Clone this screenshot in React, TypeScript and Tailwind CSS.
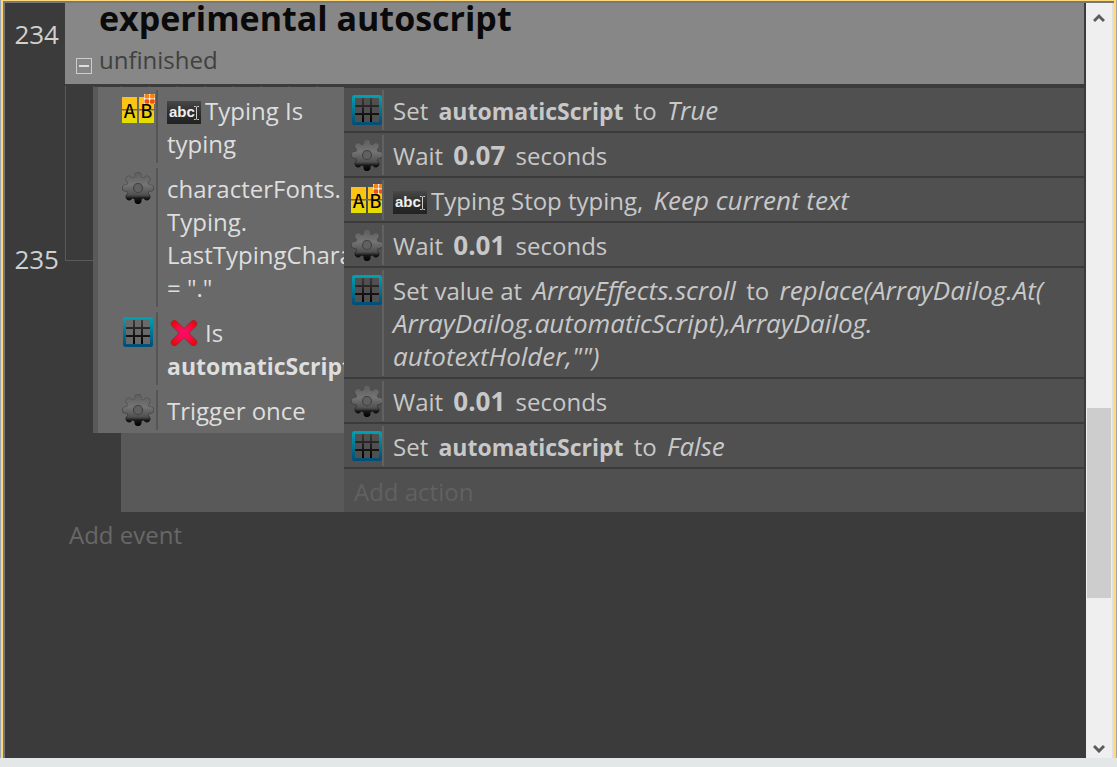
import type { ReactNode } from 'react';

const GEAR_ANGLES = [0, 45, 90, 135, 180, 225, 270, 315];

function GearIcon() {
  return (
    <svg width="32" height="32" viewBox="0 0 32 32" className="block shrink-0">
      <defs>
        <linearGradient id="gear-body" gradientUnits="userSpaceOnUse" x1="0" y1="0" x2="0" y2="32">
          <stop offset="0" stopColor="#4c4c4c" />
          <stop offset="0.4" stopColor="#484848" />
          <stop offset="0.7" stopColor="#2c2c2c" />
          <stop offset="0.85" stopColor="#080808" />
          <stop offset="1" stopColor="#000000" />
        </linearGradient>
        <linearGradient id="gear-face" gradientUnits="userSpaceOnUse" x1="0" y1="0" x2="0" y2="32">
          <stop offset="0" stopColor="#5c5c5c" />
          <stop offset="0.4" stopColor="#747474" />
          <stop offset="0.72" stopColor="#505050" />
          <stop offset="0.82" stopColor="#181818" />
          <stop offset="1" stopColor="#000000" />
        </linearGradient>
      </defs>
      {['gear-body', 'gear-face'].map((fill, layer) => (
        <g key={fill} stroke={`url(#${fill})`} strokeWidth={layer === 0 ? 7 : 5.8} strokeLinecap="round">
          {GEAR_ANGLES.map((angle) => {
            const rad = (angle * Math.PI) / 180;
            return (
              <line
                key={angle}
                x1={16}
                y1={16}
                x2={16 + Math.sin(rad) * 12.5 + 0.01}
                y2={16 - Math.cos(rad) * 12.5}
              />
            );
          })}
          <circle cx="16" cy="16" r={layer === 0 ? 11.2 : 10.8} fill={`url(#${fill})`} strokeWidth="1" />
        </g>
      ))}
      <circle cx="16" cy="16" r="4.5" fill="#606060" stroke="#424242" strokeWidth="1.2" />
    </svg>
  );
}

function ArrayIcon() {
  return (
    <svg width="32" height="32" viewBox="0 0 32 32" className="block shrink-0">
      <defs>
        <linearGradient id="array-frame" x1="0" y1="0" x2="0" y2="1">
          <stop offset="0" stopColor="#009fb2" />
          <stop offset="1" stopColor="#004f78" />
        </linearGradient>
        <linearGradient id="array-grid" x1="0" y1="0" x2="0" y2="1">
          <stop offset="0" stopColor="#3c3c3c" />
          <stop offset="1" stopColor="#000000" />
        </linearGradient>
      </defs>
      <rect x="2.5" y="2.5" width="27" height="27" rx="1" fill="none" stroke="url(#array-frame)" strokeWidth="3" />
      <path
        d="M11 4h2v7h6V4h2v7h7v2h-7v6h7v2h-7v7h-2v-7h-6v7h-2v-7H4v-2h7v-6H4v-2h7zM13 13v6h6v-6z"
        fill="url(#array-grid)"
        fillRule="evenodd"
      />
    </svg>
  );
}

function SpriteFontIcon() {
  return (
    <svg width="34" height="32" viewBox="0 0 34 32" className="block shrink-0">
      <defs>
        <linearGradient id="tile" x1="0" y1="0" x2="0" y2="1">
          <stop offset="0" stopColor="#ffc01c" />
          <stop offset="0.5" stopColor="#fbc80c" />
          <stop offset="1" stopColor="#e0e000" />
        </linearGradient>
      </defs>
      <rect x="0" y="3" width="15" height="26" fill="url(#tile)" />
      <rect x="17" y="3" width="15" height="26" fill="url(#tile)" />
      <rect x="0" y="15" width="32" height="1.5" fill="#6b6b50" />
      <g fontFamily="'DejaVu Sans Mono', monospace" fontSize="20" textAnchor="middle" fill="#000">
        <text x="7.5" y="24">A</text>
        <text x="24.5" y="24">B</text>
      </g>
      <rect x="22" y="0" width="11" height="10" fill="#fff" />
      <g fill="#f88210">
        <rect x="22.5" y="0" width="4.8" height="4.5" rx="1.2" />
        <rect x="28" y="0" width="4.8" height="4.5" rx="1.2" />
        <rect x="22.5" y="5.2" width="4.8" height="4.5" rx="1.2" fill="#ee5410" />
        <rect x="28" y="5.2" width="4.8" height="4.5" rx="1.2" fill="#ee5410" />
      </g>
    </svg>
  );
}

function TypingIcon() {
  return (
    <svg width="34" height="23" viewBox="0 0 34 23" className="mr-1 mb-0.5 inline-block align-middle">
      <defs>
        <linearGradient id="typing-bg" x1="0" y1="0" x2="0" y2="1">
          <stop offset="0" stopColor="#484848" />
          <stop offset="0.5" stopColor="#2e2e2e" />
          <stop offset="1" stopColor="#222222" />
        </linearGradient>
      </defs>
      <rect width="34" height="23" fill="url(#typing-bg)" />
      <text x="2" y="16" fontFamily="'Liberation Sans', sans-serif" fontSize="15" fontWeight="bold" fill="#f0f0f0">
        abc
      </text>
      <path d="M27 5.5h1.5l1 .5 1-.5h1.5M29.5 6v12M27 18.5h1.5l1-.5 1 .5h1.5" fill="none" stroke="#cfcfcf" />
    </svg>
  );
}

function InvertedIcon() {
  return (
    <svg width="34" height="26" viewBox="0 0 34 26" className="mr-1 mb-1.5 inline-block align-middle">
      <defs>
        <radialGradient id="cross" gradientUnits="userSpaceOnUse" cx="17" cy="13" r="15">
          <stop offset="0" stopColor="#ff0a6c" />
          <stop offset="0.5" stopColor="#fa0a48" />
          <stop offset="1" stopColor="#e80808" />
        </radialGradient>
      </defs>
      <path d="M7.5 3.8l19 18.6M26.5 3.8l-19 18.6" stroke="#8a3040" strokeWidth="7.4" strokeLinecap="round" />
      <path d="M7.5 3.8l19 18.6M26.5 3.8l-19 18.6" stroke="url(#cross)" strokeWidth="6" strokeLinecap="round" />
    </svg>
  );
}

const icons = {
  gear: <GearIcon />,
  array: <ArrayIcon />,
  font: <SpriteFontIcon />,
};

function Name({ children }: { children: ReactNode }) {
  return <b className="mx-1 text-[23px]">{children}</b>;
}

function Value({ children }: { children: ReactNode }) {
  return <i className="mx-1 text-[26px]">{children}</i>;
}

type Row = { icon: keyof typeof icons; lines: ReactNode[] };

const wait = (time: string): Row => ({
  icon: 'gear',
  lines: [<>Wait <b className="mx-1 text-[26px]">{time}</b> seconds</>],
});

const conditions: Row[] = [
  { icon: 'font', lines: [<><TypingIcon />Typing Is</>, 'typing'] },
  { icon: 'gear', lines: ['characterFonts.', 'Typing.', 'LastTypingCharacter', '= "."'] },
  { icon: 'array', lines: [<><InvertedIcon />Is</>, <b className="text-[23px]">automaticScript</b>] },
  { icon: 'gear', lines: ['Trigger once'] },
];

const actions: Row[] = [
  { icon: 'array', lines: [<>Set <Name>automaticScript</Name> to <Value>True</Value></>] },
  wait('0.07'),
  { icon: 'font', lines: [<><TypingIcon />Typing Stop typing, <Value>Keep current text</Value></>] },
  wait('0.01'),
  {
    icon: 'array',
    lines: [
      <>Set value at <Value>ArrayEffects.scroll</Value> to <Value>replace(ArrayDailog.At(</Value></>,
      <i className="text-[26px]">ArrayDailog.automaticScript),ArrayDailog.</i>,
      <i className="text-[26px]">autotextHolder,"")</i>,
    ],
  },
  wait('0.01'),
  { icon: 'array', lines: [<>Set <Name>automaticScript</Name> to <Value>False</Value></>] },
];

function Lines({ lines }: { lines: ReactNode[] }) {
  return (
    <div className="min-w-0 flex-1 overflow-hidden pt-1 pb-[3px] pl-[9px]">
      {lines.map((line, i) => (
        <div key={i} className="h-[33px] whitespace-nowrap">{line}</div>
      ))}
    </div>
  );
}

function Condition({ icon, lines }: Row) {
  return (
    <div className="flex">
      <div className="w-[34px] shrink-0 pt-1">{icons[icon]}</div>
      <div className="w-0.5 shrink-0 bg-[#555555]" />
      <Lines lines={lines} />
    </div>
  );
}

function Action({ icon, lines }: Row) {
  return (
    <div className="flex bg-[#505050] pt-0.5 pb-px pl-[7px]">
      <div className="w-[31px] shrink-0 overflow-hidden pt-1">{icons[icon]}</div>
      <div className="w-0.5 shrink-0 bg-[#616161]" />
      <Lines lines={lines} />
    </div>
  );
}

function Gutter({ children }: { children?: ReactNode }) {
  return (
    <div className="flex w-[60px] shrink-0 items-center justify-end pr-1.5 pb-0.5 text-[26px] text-[#d0d0d0]">
      {children}
    </div>
  );
}

function ScrollBar() {
  return (
    <div className="flex w-[28px] shrink-0 flex-col border-r-2 border-[#dfdfe2] bg-[#efefef]">
      <button aria-label="Scroll up" className="flex h-[30px] w-[26px] shrink-0 items-center justify-center">
        <svg width="12" height="10" viewBox="0 0 12 10">
          <path d="M1 8l5-5 5 5" fill="none" stroke="#5c5c5f" strokeWidth="3" />
        </svg>
      </button>
      <div className="flex flex-1 flex-col">
        <div className="grow-[375]" />
        <div className="mx-px grow-[190] bg-[#cdcdcd]" />
        <div className="grow-[140]" />
      </div>
      <button aria-label="Scroll down" className="flex h-[20px] w-[26px] shrink-0 items-center justify-center">
        <svg width="12" height="10" viewBox="0 0 12 10">
          <path d="M1 3l5 5 5-5" fill="none" stroke="#5c5c5f" strokeWidth="3" />
        </svg>
      </button>
    </div>
  );
}

export default function App() {
  return (
    <div className="flex h-screen flex-col overflow-hidden bg-[#e4e7e8] font-['Comic_Sans_MS','Open_Sans',sans-serif] text-2xl leading-[33px]">
      <div className="flex min-h-0 flex-1 border-l border-[#9fa9b5]">
        <div className="flex min-w-0 flex-1 border-x-2 border-t border-[#ffd878]">
          <div className="flex min-w-0 flex-1 border-t-2 border-l-2 border-[#78787a]">
            <main className="min-w-0 flex-1 overflow-hidden bg-[#3b3b3b] pr-0.5">
              {/* the group header is scrolled partly out of view */}
              <div className="-mt-[17px] flex">
                <Gutter>234</Gutter>
                <header className="flex h-[98px] min-w-0 flex-1 items-end bg-[#878787] pb-2 pl-[11px]">
                  <button
                    aria-label="Collapse group"
                    className="mb-0.5 flex size-[16px] shrink-0 items-center justify-center border border-[#cccccc]"
                  >
                    <span className="h-0.5 w-2.5 bg-[#dddddd]" />
                  </button>
                  <div className="pl-[7px] whitespace-nowrap">
                    <h1 className="text-[34px] leading-[50px] font-bold text-[#0a0a0a]">experimental autoscript</h1>
                    <p className="text-[#404040]">unfinished</p>
                  </div>
                </header>
              </div>

              <div className="flex h-[3px] items-end gap-[27px] pl-[60px]">
                {Array.from({ length: 10 }, (_, i) => (
                  <span key={i} className="h-px w-px bg-[#5a5a5a]" />
                ))}
              </div>

              <section className="flex">
                <div className="flex h-[346px]">
                  <Gutter>235</Gutter>
                  <div className="h-[174px] w-[28px] border-b border-l border-[#5a5a5a]" />
                </div>
                <div className="flex w-[251px] shrink-0 flex-col">
                  <div className="flex flex-col gap-[5px] border-l-[5px] border-[#5a5a5a] bg-[#696969] py-[3px] pl-[24px] text-[#dedede]">
                    {conditions.map((row, i) => (
                      <Condition key={i} {...row} />
                    ))}
                  </div>
                  <div className="ml-[28px] flex-1 bg-[#595959]" />
                </div>
                <div className="flex min-w-0 flex-1 flex-col gap-0.5 pt-px text-[#c8c8c8]">
                  {actions.map((row, i) => (
                    <Action key={i} {...row} />
                  ))}
                  <button className="h-[43px] bg-[#505050] pt-0.5 pl-2.5 text-left text-[#616161]">Add action</button>
                </div>
              </section>

              <button className="mt-1.5 ml-[64px] block text-[#686868]">Add event</button>
            </main>
            <ScrollBar />
          </div>
        </div>
        <div className="w-px bg-[#a3a6ab]" />
      </div>
      <div className="h-[9px] shrink-0" />
    </div>
  );
}
